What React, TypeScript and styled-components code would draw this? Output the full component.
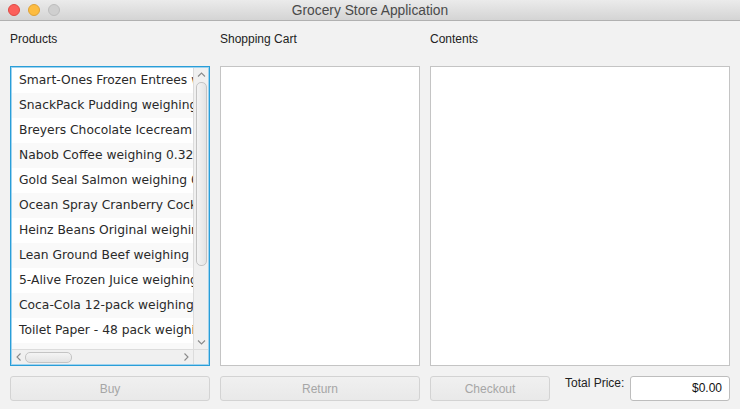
import React from "react";
import styled, { createGlobalStyle } from "styled-components";

const Global = createGlobalStyle`
  html, body { margin: 0; padding: 0; background: #f2f2f2; }
  body { width: 740px; height: 409px; overflow: hidden; font-family: "Liberation Sans", Arial, sans-serif; }
  * { box-sizing: border-box; }
`;

const Window = styled.div`
  width: 740px;
  height: 409px;
  display: flex;
  flex-direction: column;
  background: #f2f2f2;
`;

const TitleBar = styled.div`
  height: 21px;
  flex: none;
  display: flex;
  align-items: center;
  position: relative;
  background: linear-gradient(#ebebeb, #d4d4d4);
  border-bottom: 1px solid #b1b1b1;
`;

const Lights = styled.div`
  display: flex;
  gap: 8px;
  padding-left: 8px;
`;

const Light = styled.span<{ $c: string; $b: string }>`
  width: 12px;
  height: 12px;
  border-radius: 50%;
  background: ${(p) => p.$c};
  border: 1px solid ${(p) => p.$b};
`;

const Title = styled.div`
  position: absolute;
  left: 0;
  right: 0;
  text-align: center;
  font-size: 13.8px;
  color: #4a4a4a;
  pointer-events: none;
`;

const Body = styled.div`
  flex: 1;
  display: grid;
  grid-template-columns: 200px 200px 300px;
  grid-template-rows: 27px 300px 25px;
  column-gap: 10px;
  row-gap: 10px;
  padding: 8px 10px 0 10px;
`;

const Label = styled.div`
  font-size: 12px;
  color: #222;
  line-height: 20px;
`;

const Box = styled.div<{ $focused?: boolean }>`
  background: #fff;
  border: 1px solid ${(p) => (p.$focused ? "#2a9ed8" : "#c4c4c4")};
  box-shadow: ${(p) => (p.$focused ? "inset 0 0 0 1px #9fd3ef" : "none")};
  padding: ${(p) => (p.$focused ? "1px" : "0")};
  overflow: hidden;
`;

const ListLayout = styled.div`
  height: 100%;
  display: grid;
  grid-template-columns: 1fr 15px;
  grid-template-rows: 1fr 15px;
`;

const Rows = styled.div`
  overflow: hidden;
`;

const Row = styled.div<{ $alt: boolean }>`
  height: 25px;
  line-height: 25px;
  padding-left: 7px;
  white-space: nowrap;
  overflow: hidden;
  font-family: "DejaVu Sans", "Liberation Sans", sans-serif;
  font-size: 12.3px;
  color: #2a2a2a;
  background: ${(p) => (p.$alt ? "#f9f9f9" : "#ffffff")};
`;

const VTrack = styled.div`
  background: #f0f0f0;
  border-left: 1px solid #dcdcdc;
  display: flex;
  flex-direction: column;
  align-items: center;
`;

const HTrack = styled.div`
  background: #f0f0f0;
  border-top: 1px solid #dcdcdc;
  display: flex;
  align-items: center;
`;

const Corner = styled.div`
  background: #f0f0f0;
  border-top: 1px solid #dcdcdc;
  border-left: 1px solid #dcdcdc;
`;

const ArrowBox = styled.div`
  width: 14px;
  height: 14px;
  flex: none;
  display: flex;
  align-items: center;
  justify-content: center;
`;

const VThumb = styled.div`
  width: 11px;
  height: 184px;
  border-radius: 5px;
  border: 1px solid #c4c4c4;
  background: linear-gradient(90deg, #f4f4f4, #e4e4e4);
`;

const HThumb = styled.div`
  height: 11px;
  width: 47px;
  border-radius: 5px;
  border: 1px solid #c4c4c4;
  background: linear-gradient(#f4f4f4, #e4e4e4);
  margin-left: -1px;
`;

const Spacer = styled.div`
  flex: 1;
`;

const Button = styled.button<{ $w?: number }>`
  width: ${(p) => (p.$w ? `${p.$w}px` : "100%")};
  height: 25px;
  border: 1px solid #d3d3d3;
  border-radius: 3px;
  background: linear-gradient(#f0f0f0, #e9e9e9);
  color: #a6a6a6;
  font-family: "Liberation Sans", Arial, sans-serif;
  font-size: 12px;
  padding: 0;
`;

const BottomRight = styled.div`
  display: flex;
  align-items: flex-start;
`;

const PriceLabel = styled.div`
  font-size: 12px;
  color: #222;
  margin-left: 15px;
  width: 65px;
  line-height: 15px;
`;

const PriceField = styled.div`
  width: 100px;
  height: 25px;
  background: #fff;
  border: 1px solid #bdbdbd;
  border-radius: 3px;
  font-size: 12px;
  color: #111;
  text-align: right;
  padding-right: 7px;
  line-height: 23px;
`;

const Chevron = ({ dir }: { dir: "up" | "down" | "left" | "right" }) => {
  const d = {
    up: "M2 6.5 L5.5 3 L9 6.5",
    down: "M2 3.5 L5.5 7 L9 3.5",
    left: "M6.5 1.5 L3 5 L6.5 8.5",
    right: "M3.5 1.5 L7 5 L3.5 8.5",
  }[dir];
  const vert = dir === "up" || dir === "down";
  return (
    <svg width={vert ? 11 : 10} height={10} viewBox={vert ? "0 0 11 10" : "0 0 10 10"}>
      <path d={d} fill="none" stroke="#8a8a8a" strokeWidth="1.1" />
    </svg>
  );
};

const products = [
  "Smart-Ones Frozen Entrees weighing 0.311kg",
  "SnackPack Pudding weighing 0.396kg",
  "Breyers Chocolate Icecream weighing 2.27kg",
  "Nabob Coffee weighing 0.326kg",
  "Gold Seal Salmon weighing 0.213kg",
  "Ocean Spray Cranberry Cocktail weighing 2.26kg",
  "Heinz Beans Original weighing 0.477kg",
  "Lean Ground Beef weighing 0.75kg",
  "5-Alive Frozen Juice weighing 0.426kg",
  "Coca-Cola 12-pack weighing 5.112kg",
  "Toilet Paper - 48 pack weighing 10.89kg",
  "Kraft Dinner weighing 0.225kg",
];

export default function App() {
  return (
    <>
      <Global />
      <Window>
        <TitleBar>
          <Lights>
            <Light $c="#fc605b" $b="#de4a44" />
            <Light $c="#fdbc40" $b="#dea236" />
            <Light $c="#cfcfcf" $b="#bdbdbd" />
          </Lights>
          <Title>Grocery Store Application</Title>
        </TitleBar>
        <Body>
          <Label>Products</Label>
          <Label>Shopping Cart</Label>
          <Label>Contents</Label>

          <Box $focused>
            <ListLayout>
              <Rows>
                {products.map((p, i) => (
                  <Row key={p} $alt={i % 2 === 1}>
                    {p}
                  </Row>
                ))}
              </Rows>
              <VTrack>
                <ArrowBox>
                  <Chevron dir="up" />
                </ArrowBox>
                <VThumb />
                <Spacer />
                <ArrowBox>
                  <Chevron dir="down" />
                </ArrowBox>
              </VTrack>
              <HTrack>
                <ArrowBox>
                  <Chevron dir="left" />
                </ArrowBox>
                <HThumb />
                <Spacer />
                <ArrowBox>
                  <Chevron dir="right" />
                </ArrowBox>
              </HTrack>
              <Corner />
            </ListLayout>
          </Box>
          <Box />
          <Box />

          <Button disabled>Buy</Button>
          <Button disabled>Return</Button>
          <BottomRight>
            <Button disabled $w={120}>
              Checkout
            </Button>
            <PriceLabel>Total Price:</PriceLabel>
            <PriceField>$0.00</PriceField>
          </BottomRight>
        </Body>
      </Window>
    </>
  );
}
